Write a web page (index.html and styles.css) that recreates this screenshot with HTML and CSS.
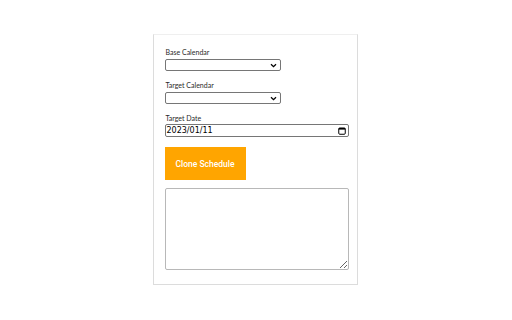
FILE: index.html
```html
<!DOCTYPE html>
<html>
<head>
<meta charset="utf-8">
<link rel="stylesheet" href="styles.css">
</head>
<body>
<div class="card">
  <div class="group">
    <label class="label">Base Calendar</label>
    <div class="select"><span class="chev"><svg width="7" height="5" viewBox="0 0 7 5"><path d="M1 1.2 L3.5 3.6 L6 1.2" fill="none" stroke="#000" stroke-width="1.3"/></svg></span></div>
  </div>
  <div class="group group-two">
    <label class="label">Target Calendar</label>
    <div class="select"><span class="chev"><svg width="7" height="5" viewBox="0 0 7 5"><path d="M1 1.2 L3.5 3.6 L6 1.2" fill="none" stroke="#000" stroke-width="1.3"/></svg></span></div>
  </div>
  <div class="group group-date">
    <label class="label label-date">Target Date</label>
    <div class="date"><span class="date-text">2023/01/11</span><svg width="8" height="8" viewBox="0 0 8 8"><rect x="0.75" y="1" width="6.5" height="6.25" rx="1" fill="none" stroke="#000" stroke-width="1"/><rect x="0.75" y="1" width="6.5" height="1.6" fill="#000"/></svg></div>
  </div>
  <button class="btn">Clone Schedule</button>
  <textarea class="output"></textarea>
</div>
</body>
</html>
```
FILE: styles.css
```css
html, body {
  margin: 0;
  padding: 0;
  background: #fff;
}
*, *::before, *::after {
  box-sizing: border-box;
}
body {
  display: flex;
  justify-content: center;
  padding-top: 34px;
  padding-right: 2px;
  font-family: Lato, "Open Sans", sans-serif;
}
.card {
  width: 205px;
  height: 251px;
  padding: 12px 9px 0 11px;
  border: 1px solid #dcdcdc;
  border-top-color: #efefef;
  display: flex;
  flex-direction: column;
}
.group {
  display: flex;
  flex-direction: column;
  margin-bottom: 9px;
}
.group-two {
  margin-bottom: 9px;
}
.group-date {
  margin-bottom: 10px;
}
.label {
  font-size: 7px;
  line-height: 11px;
  color: #2a2a2a;
  margin-left: 1px;
  margin-bottom: 1px;
}
.label-date {
  margin-bottom: 0;
}
.select {
  width: 116px;
  height: 12px;
  border: 1px solid #767676;
  border-radius: 2px;
  display: flex;
  justify-content: flex-end;
  align-items: center;
  padding-right: 3px;
}
.chev {
  display: flex;
}
.date {
  width: 184px;
  height: 13px;
  border: 1px solid #767676;
  border-radius: 2px;
  display: flex;
  justify-content: space-between;
  align-items: center;
  padding: 0 2px 0 1px;
}
.date-text {
  font-family: "DejaVu Sans", sans-serif;
  font-size: 8px;
  color: #000;
}
.btn {
  width: 81px;
  height: 33px;
  background: #ffa500;
  border: none;
  color: #fff;
  font-family: Roboto, sans-serif;
  font-size: 8.5px;
  font-weight: 500;
  padding: 0;
  margin: 0 0 8px 0;
}
.output {
  width: 184px;
  height: 82px;
  border: 1px solid #b8b8b8;
  border-radius: 2px;
  margin: 0;
  padding: 2px;
}
```
